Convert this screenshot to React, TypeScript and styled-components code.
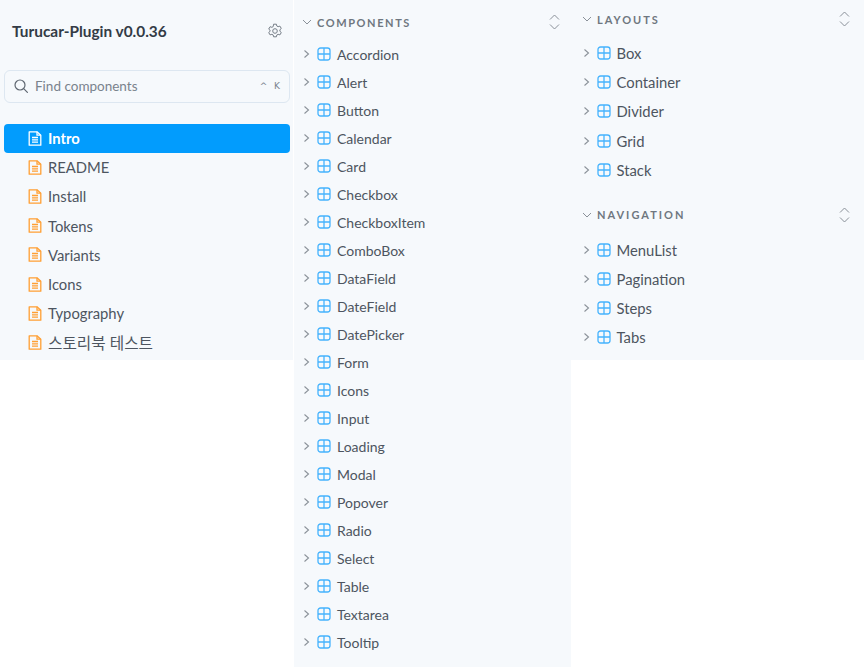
import styled, { createGlobalStyle } from 'styled-components';

const GlobalStyle = createGlobalStyle`
  html, body {
    margin: 0;
    padding: 0;
    background: #fff;
  }
  body {
    font-family: "Lato", "Noto Sans CJK KR", sans-serif;
    color: #4b5563;
  }
`;

const Page = styled.div`
  display: flex;
  align-items: flex-start;
  width: 865px;
  height: 668px;
  overflow: hidden;
`;

const Panel = styled.div<{ $w: number; $h: number; $pt?: number; $ml?: number }>`
  width: ${(p) => p.$w}px;
  height: ${(p) => p.$h}px;
  margin-left: ${(p) => p.$ml ?? 0}px;
  padding-top: ${(p) => p.$pt ?? 0}px;
  box-sizing: border-box;
  background: #f6f9fc;
  flex-shrink: 0;
`;

const Brand = styled.div`
  display: flex;
  justify-content: space-between;
  align-items: center;
  height: 22px;
  padding: 20px 10px 0 12px;
  font-size: 15.4px;
  font-weight: 700;
  color: #333b46;
`;

const SearchBox = styled.div`
  display: flex;
  align-items: center;
  box-sizing: border-box;
  width: 286px;
  height: 33px;
  margin: 28px 0 21px 4px;
  padding: 0 9px 2px;
  border: 1px solid #dde7f1;
  border-radius: 6px;
  font-size: 13.5px;
  color: #7a838d;
`;

const SearchText = styled.span`
  flex: 1;
  margin-left: 7px;
`;

const Keys = styled.span`
  font-family: "DejaVu Sans", sans-serif;
  font-size: 9px;
  color: #7a838d;
  word-spacing: 4px;
`;

const DocRow = styled.div<{ $active?: boolean; $size?: number }>`
  display: flex;
  align-items: center;
  box-sizing: border-box;
  width: 286px;
  height: 29.2px;
  margin-left: 4px;
  padding: 0 0 1px 24px;
  gap: 6px;
  border-radius: 4px;
  font-size: ${(p) => p.$size ?? 14.8}px;
  font-weight: ${(p) => (p.$active ? 700 : 400)};
  color: ${(p) => (p.$active ? '#fff' : '#4d5560')};
  background: ${(p) => (p.$active ? '#029cfd' : 'transparent')};
`;

const Heading = styled.div<{ $pl: number; $pr: number; $ls: number; $mt?: number; $mb: number }>`
  display: flex;
  align-items: center;
  height: 24px;
  margin-top: ${(p) => p.$mt ?? 0}px;
  margin-bottom: ${(p) => p.$mb}px;
  padding: 0 ${(p) => p.$pr}px 0 ${(p) => p.$pl}px;
  font-size: 11px;
  font-weight: 700;
  letter-spacing: ${(p) => p.$ls}px;
  color: #6f7780;
`;

const HeadingLabel = styled.span`
  flex: 1;
  margin-left: 5px;
`;

const TreeRow = styled.div<{ $h: number; $pl: number; $size: number }>`
  display: flex;
  align-items: center;
  gap: 6px;
  height: ${(p) => p.$h}px;
  padding-left: ${(p) => p.$pl}px;
  font-size: ${(p) => p.$size}px;
  color: #4d5560;
`;

const RowIcon = styled.svg`
  flex-shrink: 0;
  display: block;
`;

const Gear = () => (
  <RowIcon width="16" height="16" viewBox="0 0 16 16" fill="none" stroke="#777f88" strokeWidth="1">
    <path d="M6.6 1.2h2.8l.4 1.8 1.3.7 1.8-.6 1.4 2.4-1.4 1.2v1.6l1.4 1.2-1.4 2.4-1.8-.6-1.3.7-.4 1.8H6.6l-.4-1.8-1.3-.7-1.8.6-1.4-2.4 1.4-1.2V7.3L1.7 6.1l1.4-2.4 1.8.6 1.3-.7z" />
    <circle cx="8" cy="8" r="2.3" />
  </RowIcon>
);

const Search = () => (
  <RowIcon width="14" height="14" viewBox="0 0 14 14" fill="none" stroke="#5f6771" strokeWidth="1.2">
    <circle cx="6" cy="6" r="5" />
    <path d="M9.7 9.7l3.7 3.7" strokeLinecap="round" />
  </RowIcon>
);

const Doc = ({ active }: { active?: boolean }) => (
  <RowIcon width="14" height="15" viewBox="0 0 14 15" fill="none" stroke={active ? '#fff' : '#ff9f33'} strokeWidth="1.3">
    <path d="M1.2.8H9l3.8 3.4v10H1.2z" strokeLinejoin="round" />
    <path d="M9 .8v3.4h3.8M4 6.5h6M4 8.8h6M4 11.1h6" />
  </RowIcon>
);

const Comp = () => (
  <RowIcon width="14" height="14" viewBox="0 0 14 14" fill="none" stroke="#45b3fd" strokeWidth="1.3">
    <rect x="1" y="1" width="12" height="12" rx="2.5" />
    <path d="M7 1v12M1 7h12" />
  </RowIcon>
);

const Caret = () => (
  <RowIcon width="9" height="10" viewBox="0 0 9 10" fill="none" stroke="#8a9199" strokeWidth="1.1">
    <path d="M2.5 1.5l4 3.5-4 3.5" />
  </RowIcon>
);

const Down = () => (
  <RowIcon width="10" height="8" viewBox="0 0 10 8" fill="none" stroke="#8a9199" strokeWidth="1">
    <path d="M1 2l4 4 4-4" />
  </RowIcon>
);

const Expand = () => (
  <RowIcon width="11" height="16" viewBox="0 0 11 16" fill="none" stroke="#8a9199" strokeWidth="1">
    <path d="M1 5.5L5.5 1 10 5.5M1 10.5L5.5 15 10 10.5" />
  </RowIcon>
);

const docs = ['README', 'Install', 'Tokens', 'Variants', 'Icons', 'Typography'];
const components = [
  'Accordion', 'Alert', 'Button', 'Calendar', 'Card', 'Checkbox', 'CheckboxItem', 'ComboBox',
  'DataField', 'DateField', 'DatePicker', 'Form', 'Icons', 'Input', 'Loading', 'Modal',
  'Popover', 'Radio', 'Select', 'Table', 'Textarea', 'Tooltip',
];
const layouts = ['Box', 'Container', 'Divider', 'Grid', 'Stack'];
const navigation = ['MenuList', 'Pagination', 'Steps', 'Tabs'];

type TreeProps = { items: string[]; h: number; pl: number; size: number };

const Tree = ({ items, h, pl, size }: TreeProps) => (
  <>
    {items.map((name) => (
      <TreeRow key={name} $h={h} $pl={pl} $size={size}>
        <Caret />
        <Comp />
        {name}
      </TreeRow>
    ))}
  </>
);

type SectionProps = { title: string; pl: number; pr: number; ls: number; mt?: number; mb: number };

const Section = ({ title, pl, pr, ls, mt, mb }: SectionProps) => (
  <Heading $pl={pl} $pr={pr} $ls={ls} $mt={mt} $mb={mb}>
    <Down />
    <HeadingLabel>{title}</HeadingLabel>
    <Expand />
  </Heading>
);

export default function App() {
  return (
    <Page>
      <GlobalStyle />
      <Panel $w={293} $h={360}>
        <Brand>
          Turucar-Plugin v0.0.36
          <Gear />
        </Brand>
        <SearchBox>
          <Search />
          <SearchText>Find components</SearchText>
          <Keys>^ K</Keys>
        </SearchBox>
        <DocRow $active>
          <Doc active />
          Intro
        </DocRow>
        {docs.map((name) => (
          <DocRow key={name}>
            <Doc />
            {name}
          </DocRow>
        ))}
        <DocRow $size={15.7}>
          <Doc />
          스토리북 테스트
        </DocRow>
      </Panel>
      <Panel $w={277} $h={667} $pt={10} $ml={1}>
        <Section title="COMPONENTS" pl={8} pr={11} ls={1.6} mb={6} />
        <Tree items={components} h={28} pl={8} size={14} />
      </Panel>
      <Panel $w={293} $h={360} $pt={7}>
        <Section title="LAYOUTS" pl={11} pr={14} ls={2} mb={7.5} />
        <Tree items={layouts} h={29.2} pl={10.5} size={14.8} />
        <Section title="NAVIGATION" pl={11} pr={14} ls={2} mt={18.5} mb={8} />
        <Tree items={navigation} h={29.2} pl={10.5} size={14.8} />
      </Panel>
    </Page>
  );
}
